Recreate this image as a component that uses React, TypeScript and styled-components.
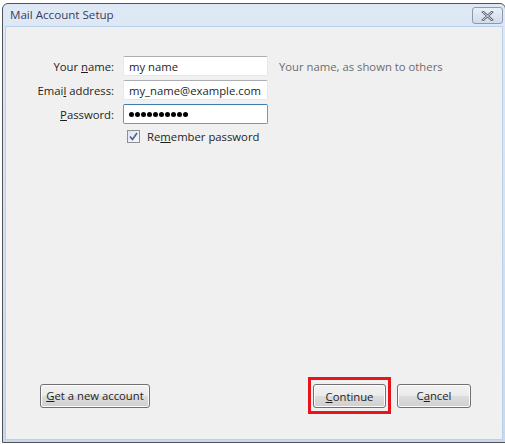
import styled, { createGlobalStyle } from "styled-components";

const GlobalStyle = createGlobalStyle`
  html, body {
    margin: 0;
    padding: 0;
    background: #ffffff;
  }
  body {
    font: 11.3px "Open Sans", "Noto Sans", sans-serif;
    color: #1e1e1e;
  }
`;

const DOTS = 10;

const App = () => {
  return (
    <>
      <GlobalStyle />
      <Page>
        <Window>
          <TitleBar>
            <Title>Mail Account Setup</Title>
            <CloseButton aria-label="Close">
              <svg width="13" height="10" viewBox="0 0 13 10">
                <path
                  d="M2 1 L11 9 M11 1 L2 9"
                  stroke="#5a5f6a"
                  strokeWidth="2.4"
                  strokeLinecap="square"
                />
                <path
                  d="M2 1 L11 9 M11 1 L2 9"
                  stroke="#f4f6f9"
                  strokeWidth="0.9"
                  strokeLinecap="square"
                />
              </svg>
            </CloseButton>
          </TitleBar>
          <Body>
            <Form>
              <Label>
                Your <u>n</u>ame:
              </Label>
              <TextBox>my name</TextBox>
              <Hint>Your name, as shown to others</Hint>

              <Label>
                Emai<u>l</u> address:
              </Label>
              <TextBox>my_name@example.com</TextBox>
              <span />

              <Label>
                <u>P</u>assword:
              </Label>
              <TextBox $focused>
                <Dots>
                  {Array.from({ length: DOTS }).map((_, i) => (
                    <Dot key={i} />
                  ))}
                </Dots>
              </TextBox>
              <span />

              <span />
              <CheckRow>
                <CheckBox>
                  <svg width="9" height="9" viewBox="0 0 9 9">
                    <path
                      d="M1 4.5 L3.5 7.5 L8 1"
                      fill="none"
                      stroke="#4a5f97"
                      strokeWidth="1.6"
                    />
                  </svg>
                </CheckBox>
                <span>
                  Re<u>m</u>ember password
                </span>
              </CheckRow>
            </Form>

            <ButtonRow>
              <Button $width={110}>
                <u>G</u>et a new account
              </Button>
              <RightButtons>
                <Highlight>
                  <Button $width={73}>
                    <u>C</u>ontinue
                  </Button>
                </Highlight>
                <Button $width={74}>
                  C<u>a</u>ncel
                </Button>
              </RightButtons>
            </ButtonRow>
          </Body>
        </Window>
      </Page>
    </>
  );
};

const Page = styled.div`
  width: 505px;
  height: 444px;
  overflow: hidden;
  padding: 3px 0 0 2px;
  box-sizing: border-box;
`;

const Window = styled.div`
  width: 504px;
  height: 440px;
  box-sizing: border-box;
  display: flex;
  flex-direction: column;
  border: 1px solid #4f5359;
  border-radius: 6px 6px 0 0;
  background: linear-gradient(#dfe9f5, #c9d9ed);
  padding: 0 2px 2px 2px;
`;

const TitleBar = styled.div`
  display: flex;
  align-items: flex-start;
  justify-content: space-between;
  height: 22px;
  padding: 0 0 0 5px;
`;

const Title = styled.div`
  padding-top: 3px;
  font-size: 11.6px;
  color: #3b3b5e;
`;

const CloseButton = styled.div`
  display: flex;
  align-items: center;
  justify-content: center;
  margin-top: 3px;
  width: 31px;
  height: 17px;
  box-sizing: border-box;
  border: 1px solid #8d9aae;
  border-radius: 3px;
  background: linear-gradient(#e9eff7, #cfdcec);
`;

const Body = styled.div`
  flex: 1;
  display: flex;
  flex-direction: column;
  justify-content: space-between;
  background: #f0f0f0;
  border: 1px solid #b9d1ea;
  padding: 29px 31px 25px 0;
`;

const Form = styled.div`
  display: grid;
  grid-template-columns: 108px 145px auto;
  column-gap: 9px;
  row-gap: 4px;
  align-items: center;
`;

const Label = styled.div`
  text-align: right;
  white-space: nowrap;
  color: #1e1e1e;
`;

const TextBox = styled.div<{ $focused?: boolean }>`
  display: flex;
  align-items: center;
  height: 20px;
  box-sizing: border-box;
  padding: 0 5px;
  background: #ffffff;
  white-space: nowrap;
  overflow: hidden;
  border: 1px solid ${(p) => (p.$focused ? "#569de5" : "#e3e9ef")};
  border-top-color: ${(p) => (p.$focused ? "#3d7bad" : "#abadb3")};
  border-radius: 2px;
`;

const Hint = styled.div`
  padding-left: 2px;
  color: #6d6d6d;
  white-space: nowrap;
`;

const Dots = styled.div`
  display: flex;
  gap: 1px;
`;

const Dot = styled.span`
  width: 5px;
  height: 5px;
  border-radius: 50%;
  background: #000000;
`;

const CheckRow = styled.label`
  display: flex;
  align-items: center;
  gap: 7px;
  padding: 1px 0 0 4px;
`;

const CheckBox = styled.span`
  display: flex;
  align-items: center;
  justify-content: center;
  width: 13px;
  height: 13px;
  box-sizing: border-box;
  border: 1px solid #8e8f8f;
  background: linear-gradient(135deg, #e0e4ea, #f7f8fa);
`;

const ButtonRow = styled.div`
  display: flex;
  align-items: center;
  justify-content: space-between;
  padding-left: 34px;
`;

const RightButtons = styled.div`
  display: flex;
  align-items: center;
  gap: 6px;
`;

const Highlight = styled.div`
  border: 3px solid #e8141c;
  padding: 4px 2px 3px 2px;
`;

const Button = styled.div<{ $width: number }>`
  display: flex;
  align-items: center;
  justify-content: center;
  width: ${(p) => p.$width}px;
  height: 24px;
  box-sizing: border-box;
  border: 1px solid #707070;
  border-radius: 3px;
  background: linear-gradient(#f2f2f2 0%, #ebebeb 50%, #dddddd 51%, #cfcfcf 100%);
  box-shadow: inset 0 0 0 1px #fcfcfc;
  color: #1e1e1e;
  white-space: nowrap;
`;

export default App;
